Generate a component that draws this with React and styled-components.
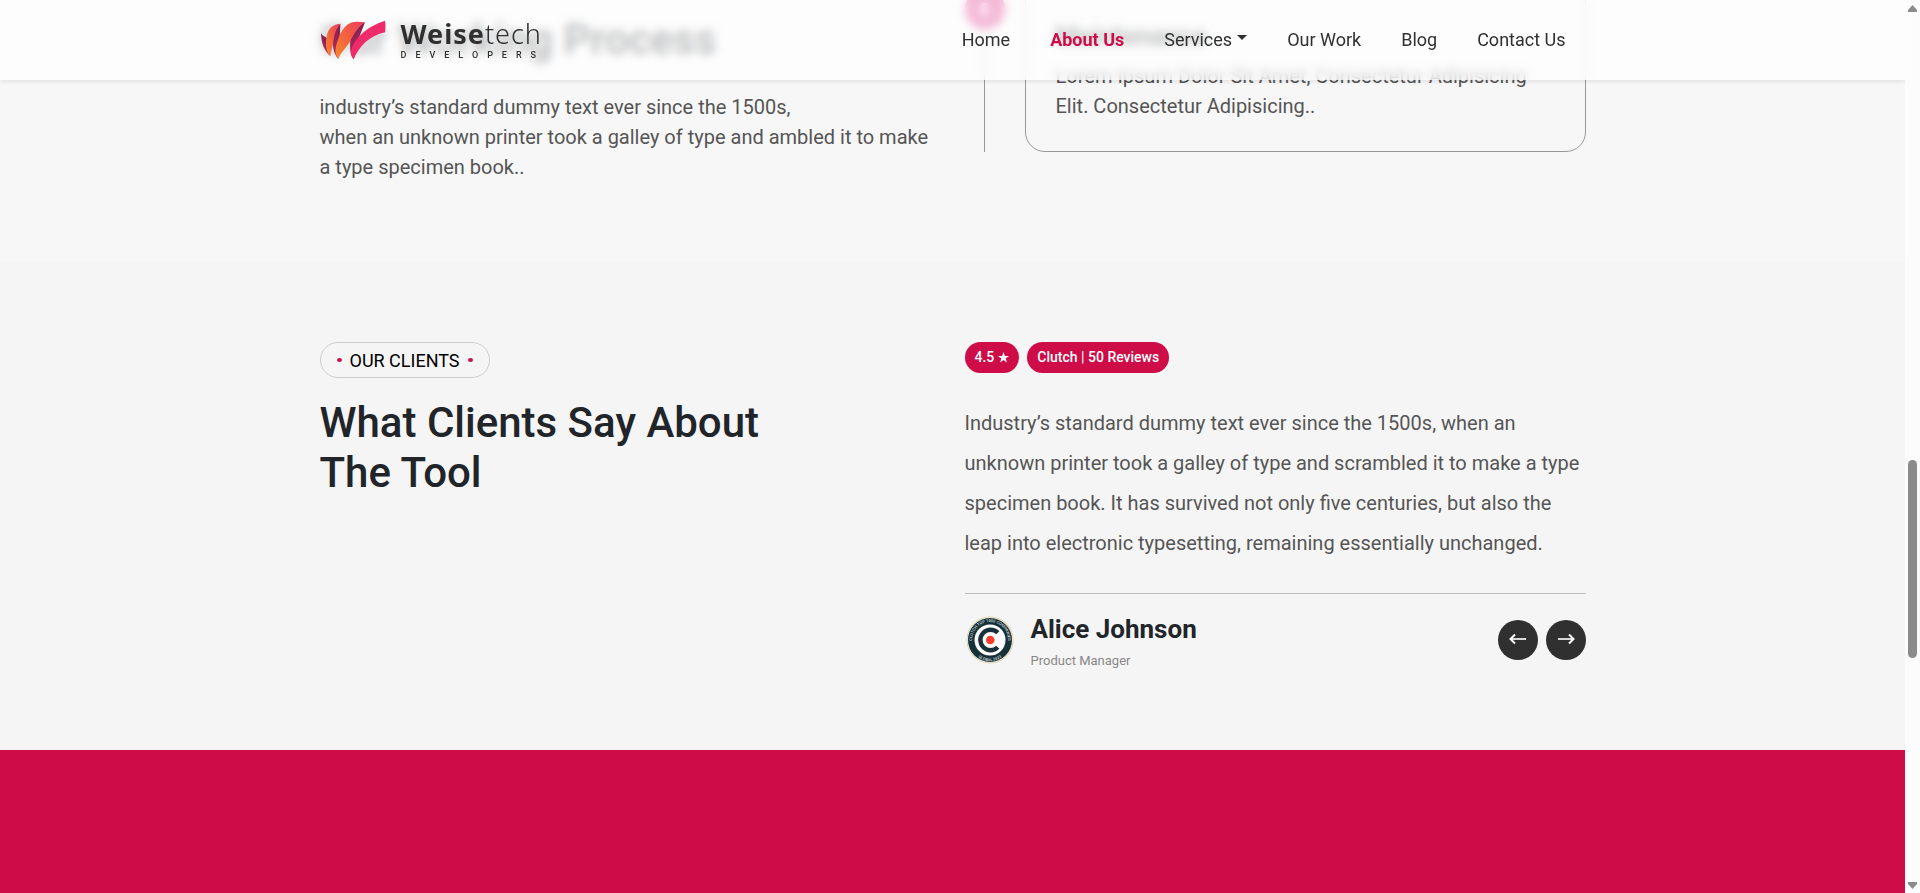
import React from "react";
import styled, { createGlobalStyle } from "styled-components";

const crimson = "#cd0c48";

const GlobalStyle = createGlobalStyle`
  *, *::before, *::after { box-sizing: border-box; }
  body {
    margin: 0;
    background: #fcfcfc;
    color: #212529;
    font-family: Roboto, "Liberation Sans", sans-serif;
    font-size: 18px;
    line-height: 1.5;
  }
  h1, h2, h3, p, ul { margin: 0; padding: 0; }
`;

const Viewport = styled.div`
  display: grid;
  grid-template-columns: minmax(0, 1fr) 15px;
  height: 100vh;
  overflow: hidden;
`;

const Page = styled.div`
  position: relative;
  display: flex;
  flex-direction: column;
  overflow: hidden;
`;

const Container = styled.div`
  width: 100%;
  max-width: 1290px;
  margin: 0 auto;
  padding: 0 12px;
`;

const Columns = styled(Container)`
  display: grid;
  grid-template-columns: 1fr 1fr;
  column-gap: 24px;
`;

/* Header */

const Header = styled.header`
  position: absolute;
  inset: 0 0 auto;
  z-index: 10;
  height: 80px;
  display: flex;
  align-items: center;
  background: rgba(255, 255, 255, 0.7);
  backdrop-filter: blur(5px);
  box-shadow: 0 2px 4px rgba(0, 0, 0, 0.08);
`;

const HeaderRow = styled(Container)`
  display: flex;
  align-items: center;
  justify-content: space-between;
`;

const Brand = styled.a`
  display: flex;
  align-items: center;
  gap: 15px;
  color: #303030;
  text-decoration: none;
`;

const BrandMark = styled.svg`
  width: 66px;
  height: 40px;
`;

const BrandText = styled.span`
  display: flex;
  flex-direction: column;
`;

const BrandName = styled.span`
  font-family: "Noto Sans", sans-serif;
  font-size: 27px;
  line-height: 30px;
  font-weight: 300;
  letter-spacing: 1px;
  b { font-weight: 700; }
`;

const BrandTag = styled.span`
  font-size: 9px;
  line-height: 12px;
  font-weight: 500;
  letter-spacing: 9px;
`;

const NavList = styled.ul`
  display: flex;
  list-style: none;
`;

const NavLink = styled.a`
  display: flex;
  align-items: center;
  padding: 7px 20px 9px;
  color: ${(p) => (p.$active ? crimson : "#303030")};
  font-weight: ${(p) => (p.$active ? 700 : 400)};
  text-decoration: none;
`;

const Caret = styled.span`
  margin: -4px 0 0 5px;
  border: 5px solid transparent;
  border-top-color: currentColor;
  border-bottom: 0;
`;

/* Working process */

const Process = styled.section`
  flex: none;
  margin-top: -40px;
  padding-bottom: 80px;
  background: #f7f7f7;
`;

const ProcessIntro = styled.div`
  display: flex;
  flex-direction: column;
  gap: 27px;
  padding-top: 55px;
`;

const Title = styled.h2`
  max-width: 500px;
  font-size: 42px;
  line-height: 50px;
  font-weight: ${(p) => (p.$strong ? 600 : 500)};
`;

const Copy = styled.p`
  color: #555;
  font-size: 20px;
  line-height: ${(p) => (p.$loose ? 40 : 30)}px;
`;

const Step = styled.div`
  display: grid;
  grid-template-columns: 40px 1fr;
  column-gap: 20px;
  margin-bottom: 30px;
`;

const StepRail = styled.div`
  display: flex;
  flex-direction: column;
  align-items: center;
  padding-top: 29px;
  &::after {
    content: "";
    flex: 1;
    width: 1px;
    background: #999;
  }
`;

const StepNumber = styled.span`
  display: grid;
  place-items: center;
  width: 40px;
  height: 40px;
  border-radius: 50%;
  background: #da1276;
  color: #fff;
  font-weight: 700;
`;

const StepCard = styled.article`
  display: flex;
  flex-direction: column;
  gap: 9px;
  padding: 60px 30px 30px;
  border: 1px solid #999;
  border-radius: 20px;
`;

const StepTitle = styled.h3`
  font-size: 26px;
  line-height: 31px;
  font-weight: 600;
`;

/* Clients */

const Clients = styled.section`
  flex: none;
  padding: 80px 0;
  background: #f5f5f5;
`;

const ClientsIntro = styled.div`
  display: flex;
  flex-direction: column;
  align-items: flex-start;
  gap: 20px;
`;

const Eyebrow = styled.span`
  display: flex;
  align-items: center;
  gap: 8px;
  height: 36px;
  padding: 0 16px;
  border: 1px solid #ccc;
  border-radius: 18px;
  color: #000;
  &::before, &::after {
    content: "";
    width: 5px;
    height: 4px;
    border-radius: 50%;
    background: ${crimson};
  }
`;

const Badges = styled.div`
  display: flex;
  gap: 8px;
  margin-bottom: 30px;
`;

const Badge = styled.span`
  display: flex;
  align-items: center;
  gap: 4px;
  height: 31px;
  padding: 0 10px;
  border-radius: 16px;
  background: ${crimson};
  color: #fff;
  font-size: 14px;
  font-weight: 500;
`;

const Author = styled.div`
  display: flex;
  align-items: center;
  margin-top: 30px;
  padding-top: 16px;
  border-top: 1px solid #bbb;
`;

const AuthorText = styled.div`
  display: flex;
  flex-direction: column;
  gap: 7px;
  padding: 4px 0 0 16px;
`;

const AuthorName = styled.h3`
  font-size: 26px;
  line-height: 31px;
  font-weight: 700;
`;

const AuthorRole = styled.span`
  color: #888;
  font-size: 13px;
  line-height: 18px;
`;

const Arrows = styled.div`
  display: flex;
  gap: 8px;
  margin-left: auto;
`;

const ArrowButton = styled.button`
  display: grid;
  place-items: center;
  width: 40px;
  height: 40px;
  padding: 0;
  border: 0;
  border-radius: 50%;
  background: #303030;
  color: #fff;
  cursor: pointer;
`;

const Banner = styled.section`
  flex: 1;
  background: ${crimson};
`;

/* Scroll bar */

const ScrollTrack = styled.div`
  display: flex;
  flex-direction: column;
  align-items: center;
  padding: 5px 0 4px;
  background: #fcfcfc;
`;

const ScrollSpace = styled.div`
  flex: ${(p) => p.$share} 0 0;
`;

const ScrollThumb = styled.div`
  flex: 198 0 0;
  width: 9px;
  border-radius: 5px;
  background: #8b8b8b;
`;

const navItems = [
  { label: "Home" },
  { label: "About Us", active: true },
  { label: "Services", menu: true },
  { label: "Our Work" },
  { label: "Blog" },
  { label: "Contact Us" },
];

function Logo() {
  return (
    <BrandMark viewBox="17 27 198 120" aria-hidden="true">
      <defs>
        <linearGradient id="warm" x1="0" y1="1" x2="1" y2="0">
          <stop offset="0" stopColor="#f98a2b" />
          <stop offset="0.5" stopColor="#f3603f" />
          <stop offset="1" stopColor="#ee3a62" />
        </linearGradient>
        <linearGradient id="plum" x1="0" y1="0" x2="0" y2="1">
          <stop offset="0" stopColor="#7c1f4c" />
          <stop offset="1" stopColor="#c32a5c" />
        </linearGradient>
      </defs>
      <path d="M20 67C25 76 32 76 38 82L48 135C30 120 21 98 20 67Z" fill="url(#plum)" />
      <path d="M78 38L76 90L72 143C60 132 54 112 56 84C60 62 66 48 78 38Z" fill="url(#plum)" />
      <path d="M152 34L128 95L118 145C107 132 106 112 108 84C116 62 132 44 152 34Z" fill="url(#plum)" />
      <path d="M35 100C36 66 42 42 78 38C62 58 60 74 57 92C54 110 50 122 48 135C39 126 35 114 35 100Z" fill="url(#warm)" />
      <path d="M64 112C72 76 88 36 120 33C132 32 143 33 152 34C126 52 116 76 104 96C92 114 80 124 72 143C64 134 62 122 64 112Z" fill="url(#warm)" />
      <path d="M118 145C110 136 108 124 112 112C126 76 160 46 212 29C214 40 214 52 212 64C166 74 136 104 118 145Z" fill="#ef2b6c" />
    </BrandMark>
  );
}

function ClutchSeal() {
  return (
    <svg width="50" height="50" viewBox="0 0 50 50" role="img" aria-label="Clutch">
      <defs>
        <path id="sealTop" d="M7 25A18 18 0 0 1 43 25" />
        <path id="sealBottom" d="M4 25A21 21 0 0 0 46 25" />
      </defs>
      <circle cx="25" cy="25" r="23.500" fill="#dccda2" />
      <circle cx="25" cy="25" r="22.700" fill="#f6f3e8" />
      <circle cx="25" cy="25" r="22" fill="#17313b" />
      <circle cx="25" cy="25" r="15.500" fill="#fff" />
      <path d="M32.800 17.800A10.200 10.200 0 1 0 32.800 32.200" fill="none" stroke="#17313b" strokeWidth="4.400" />
      <circle cx="25.300" cy="25" r="4.300" fill="#ff3d2e" />
      <g fill="#d5dada" fontSize="4" fontWeight="500" textAnchor="middle">
        <text><textPath href="#sealTop" startOffset="50%">CLUTCH TOP 1000 COMPANIES</textPath></text>
        <text><textPath href="#sealBottom" startOffset="50%">GLOBAL 2023</textPath></text>
      </g>
    </svg>
  );
}

function Arrow({ back }) {
  return (
    <svg width="18" height="12" viewBox="0 0 18 12" fill="none" stroke="currentColor" aria-hidden="true">
      <path d="M1 5H17" strokeWidth="1.800" opacity="0.900" />
      <path d={back ? "M6 0.500L1.500 5L6 9.500" : "M12 0.500L16.500 5L12 9.500"} strokeWidth="2" />
    </svg>
  );
}

function ScrollArrow({ up }) {
  return (
    <svg width="9" height="7" viewBox="0 0 9 7" fill="#8b8b8b" aria-hidden="true">
      <path d={up ? "M4.500 0L9 5V7H0V5Z" : "M0 0H9V2L4.500 7L0 2Z"} />
    </svg>
  );
}

export default function App() {
  return (
    <>
      <GlobalStyle />
      <Viewport>
        <Page>
          <Header>
            <HeaderRow>
              <Brand href="#home">
                <Logo />
                <BrandText>
                  <BrandName><b>Weise</b>tech</BrandName>
                  <BrandTag>DEVELOPERS</BrandTag>
                </BrandText>
              </Brand>
              <nav>
                <NavList>
                  {navItems.map((item) => (
                    <li key={item.label}>
                      <NavLink href="#" $active={item.active}>
                        {item.label}
                        {item.menu && <Caret />}
                      </NavLink>
                    </li>
                  ))}
                </NavList>
              </nav>
            </HeaderRow>
          </Header>

          <Process>
            <Columns>
              <ProcessIntro>
                <Title $strong>Our Working Process</Title>
                <Copy>
                  industry’s standard dummy text ever since the 1500s,
                  <br />
                  when an unknown printer took a galley of type and ambled it to make a type specimen book..
                </Copy>
              </ProcessIntro>
              <Step>
                <StepRail>
                  <StepNumber>6</StepNumber>
                </StepRail>
                <StepCard>
                  <StepTitle>Maintenance</StepTitle>
                  <Copy>Lorem Ipsum Dolor Sit Amet, Consectetur Adipisicing Elit. Consectetur Adipisicing..</Copy>
                </StepCard>
              </Step>
            </Columns>
          </Process>

          <Clients>
            <Columns>
              <ClientsIntro>
                <Eyebrow>OUR CLIENTS</Eyebrow>
                <Title>What Clients Say About The Tool</Title>
              </ClientsIntro>
              <div>
                <Badges>
                  <Badge>
                    4.5
                    <svg width="11" height="11" viewBox="0 0 24 24" fill="currentColor" aria-label="stars">
                      <path d="M12 0L15 8.700H24L16.800 14.200L19.500 23L12 17.700L4.500 23L7.200 14.200L0 8.700H9Z" />
                    </svg>
                  </Badge>
                  <Badge>Clutch | 50 Reviews</Badge>
                </Badges>
                <Copy $loose>
                  Industry’s standard dummy text ever since the 1500s, when an unknown printer took a galley of type
                  and scrambled it to make a type specimen book. It has survived not only five centuries, but also the
                  leap into electronic typesetting, remaining essentially unchanged.
                </Copy>
                <Author>
                  <ClutchSeal />
                  <AuthorText>
                    <AuthorName>Alice Johnson</AuthorName>
                    <AuthorRole>Product Manager</AuthorRole>
                  </AuthorText>
                  <Arrows>
                    <ArrowButton type="button" aria-label="Previous review"><Arrow back /></ArrowButton>
                    <ArrowButton type="button" aria-label="Next review"><Arrow /></ArrowButton>
                  </Arrows>
                </Author>
              </div>
            </Columns>
          </Clients>

          <Banner />
        </Page>
        <ScrollTrack aria-hidden="true">
          <ScrollArrow up />
          <ScrollSpace $share={448} />
          <ScrollThumb />
          <ScrollSpace $share={224} />
          <ScrollArrow />
        </ScrollTrack>
      </Viewport>
    </>
  );
}
